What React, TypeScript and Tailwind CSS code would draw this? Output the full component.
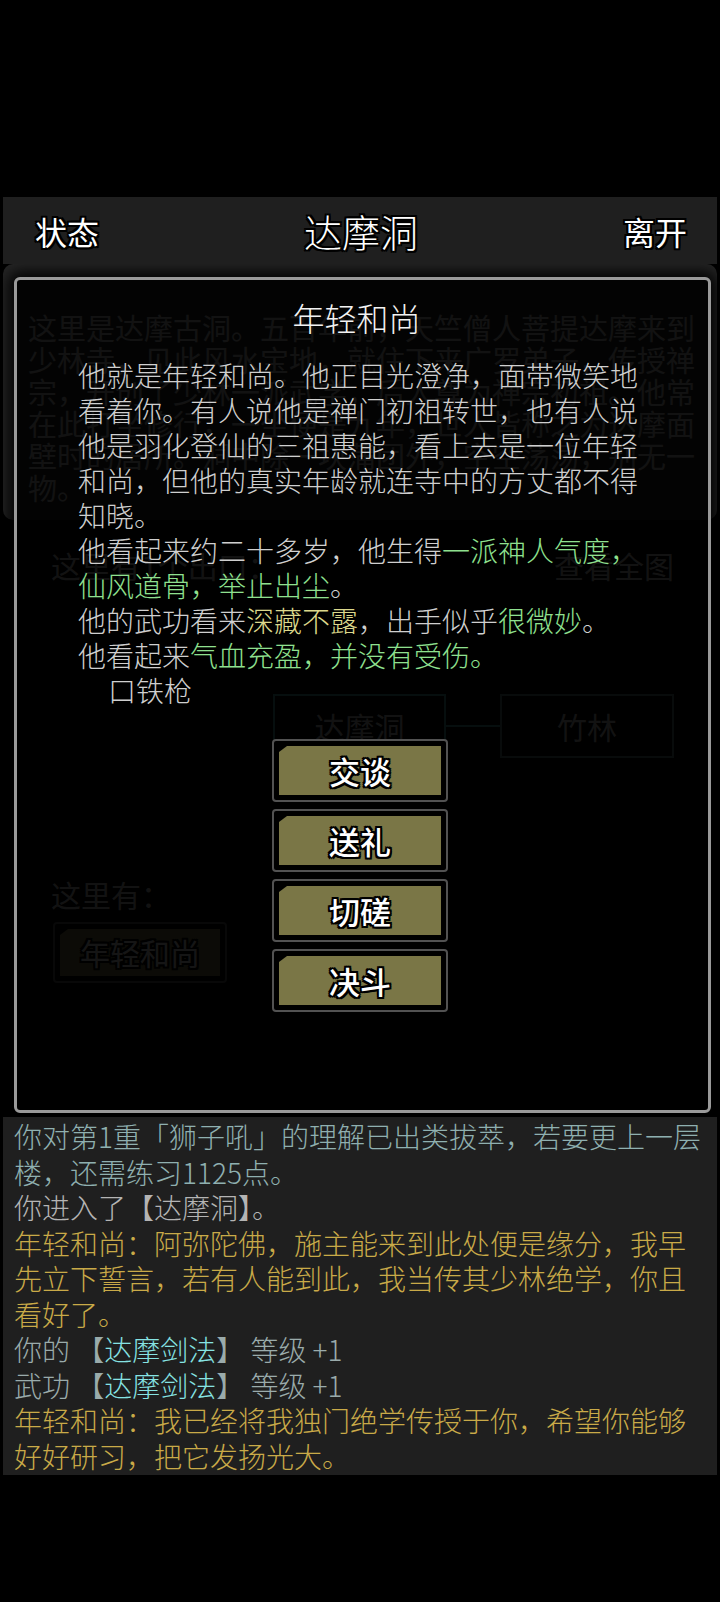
import React from 'react';

const outline =
  '[text-shadow:-2px_-2px_0_#000,2px_-2px_0_#000,-2px_2px_0_#000,2px_2px_0_#000,0_-2px_0_#000,0_2px_0_#000,-2px_0_0_#000,2px_0_0_#000]';

function ActionButton({ label }: { label: string }) {
  return (
    <div className="h-[63px] w-[176px] rounded-[4px] border-2 border-[#525252] bg-black p-[5px]">
      <div
        className={`flex h-full items-center justify-center bg-[#7a7646] text-[31px] font-medium leading-none text-white [clip-path:polygon(8px_0,100%_0,100%_100%,0_100%,0_6px)] ${outline}`}
      >
        {label}
      </div>
    </div>
  );
}

function Header() {
  return (
    <header className="mx-[3px] flex h-[67px] items-center justify-between bg-[#1f1f1f] pl-[32px] pr-[30px] text-white">
      <span className={`text-[32px] leading-none ${outline}`}>状态</span>
      <span className={`text-[38px] font-light leading-none ${outline}`}>达摩洞</span>
      <span className={`text-[32px] leading-none ${outline}`}>离开</span>
    </header>
  );
}

// the room view that sits behind the dialog
function RoomView() {
  return (
    <div>
      <div className="mx-[3px] rounded-[10px] bg-[#242424] pb-[17px] pl-[25px] pt-[47px]">
        <p className="w-[672px] text-[29px] leading-[32px] text-[#b8b8b8]">
          这里是达摩古洞。五百年前，天竺僧人菩提达摩来到少林寺，见此风水宝地，就住下来广罗弟子，传授禅宗，开创了少林一派武学，后人尊为禅宗初祖。他常在此打坐修行，一坐便是九年，世人皆称之为达摩面壁时的居所。洞中除一块蒲团外，空空荡荡，别无一物。
        </p>
      </div>
      <div className="mt-[29px] flex items-center justify-between pl-[51px] pr-[46px] text-[30px] leading-[32px] text-[#b8b8b8]">
        <span>这里有1个出口：</span>
        <span>查看全图</span>
      </div>
      <div className="mt-[113px] flex items-center pl-[273px]">
        <div className="flex h-[64px] w-[173px] items-center justify-center border-2 border-[#3f8f8f] text-[30px] text-[#b8b8b8]">
          达摩洞
        </div>
        <div className="h-[2px] w-[54px] bg-[#3f8f8f]" />
        <div className="flex h-[64px] w-[174px] items-center justify-center border-2 border-[#557070] text-[30px] text-[#b8b8b8]">
          竹林
        </div>
      </div>
      <div className="mt-[120px] pl-[51px] text-[30px] leading-[32px] text-[#b8b8b8]">这里有：</div>
      <div className="ml-[53px] mt-[12px] h-[61px] w-[174px] rounded-[4px] border-2 border-[#525252] bg-black p-[5px]">
        <div
          className={`flex h-full items-center justify-center bg-[#7a7646] text-[30px] text-[#d8d8d8] [clip-path:polygon(8px_0,100%_0,100%_100%,0_100%,0_6px)] ${outline}`}
        >
          年轻和尚
        </div>
      </div>
    </div>
  );
}

function NpcDialog() {
  const green = 'text-[#8fe08f]';
  return (
    <div className="absolute bottom-[4px] left-[14px] right-[9px] top-[13px] rounded-[6px] border-[3px] border-[#9a9a9a] bg-black/[0.9] shadow-[0_0_14px_6px_rgba(0,0,0,0.9)]">
      <div className="pr-[12px] pt-[19px] text-center text-[32px] font-light leading-[36px] text-[#f2f2f2]">年轻和尚</div>
      <div className="ml-[61px] mt-[23px] w-[566px] text-[28px] font-light leading-[35px] text-[#cfcfcf]">
        <p>
          他就是年轻和尚。他正目光澄净，面带微笑地看着你。有人说他是禅门初祖转世，也有人说他是羽化登仙的三祖惠能，看上去是一位年轻和尚，但他的真实年龄就连寺中的方丈都不得知晓。
        </p>
        <p>
          他看起来约二十多岁，他生得<span className={green}>一派神人气度，仙风道骨，举止出尘</span>。
        </p>
        <p>
          他的武功看来<span className="text-[#dcd88c]">深藏不露</span>，出手似乎<span className={green}>很微妙</span>。
        </p>
        <p>
          他看起来<span className={green}>气血充盈，并没有受伤。</span>
        </p>
        <p className="pl-[30px]">口铁枪</p>
      </div>
      <div className="ml-[255px] mt-[31px] flex w-[176px] flex-col gap-[7px]">
        <ActionButton label="交谈" />
        <ActionButton label="送礼" />
        <ActionButton label="切磋" />
        <ActionButton label="决斗" />
      </div>
    </div>
  );
}

function MessageLog() {
  const gold = 'text-[#c9aa48]';
  const dim = 'text-[#9aabab]';
  const skill = 'text-[#86e3e3]';
  return (
    <section className="mx-[3px] bg-[#1f1f1f] pb-[1px] pl-[11px] pr-[13px] pt-[2px] text-[28px] font-light leading-[35.5px]">
      <p className="text-[#8fb0b0]">你对第1重「狮子吼」的理解已出类拔萃，若要更上一层楼，还需练习1125点。</p>
      <p className="text-[#b4b4b4]">你进入了【达摩洞】。</p>
      <p className={gold}>
        年轻和尚：阿弥陀佛，施主能来到此处便是缘分，我早先立下誓言，若有人能到此，我当传其少林绝学，你且看好了。
      </p>
      <p className={dim}>
        你的 【<span className={skill}>达摩剑法</span>】 等级 +1
      </p>
      <p className={dim}>
        武功 【<span className={skill}>达摩剑法</span>】 等级 +1
      </p>
      <p className={gold}>年轻和尚：我已经将我独门绝学传授于你，希望你能够好好研习，把它发扬光大。</p>
    </section>
  );
}

export default function App() {
  return (
    <div className="min-h-[1602px] w-[720px] bg-black font-['Noto_Sans_CJK_SC','Noto_Sans',sans-serif]">
      <div className="h-[197px]" />
      <Header />
      <main className="relative h-[853px] overflow-hidden bg-black">
        <RoomView />
        <NpcDialog />
      </main>
      <MessageLog />
    </div>
  );
}
